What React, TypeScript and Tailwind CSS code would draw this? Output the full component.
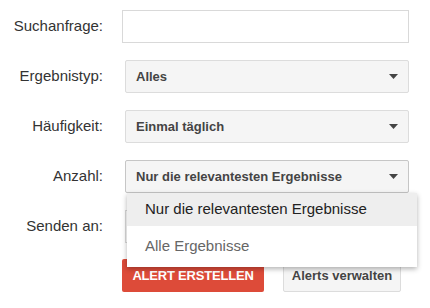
import React from 'react';

const font = { fontFamily: '"Liberation Sans", Arial, sans-serif' };

function Caret() {
    return (
        <svg width="9" height="5" viewBox="0 0 9 5" className="shrink-0">
            <path d="M0 0 L9 0 L4.5 5 Z" fill="#444" />
        </svg>
    );
}

function Row({ label, children }: { label: string; children: React.ReactNode }) {
    return (
        <div className="flex items-center h-[33px]">
            <div className="w-[104px] text-right text-[15px] text-[#333] pr-px">{label}</div>
            <div className="ml-[18px] flex-1 relative h-full">{children}</div>
        </div>
    );
}

function Select({ value, open }: { value: string; open?: boolean }) {
    return (
        <div
            className={
                open
                    ? 'ml-[3px] h-full flex items-center justify-between px-[10px] bg-[#f5f5f5] border border-[#c6c6c6] rounded-[2px] text-[13px] font-bold text-[#444]'
                    : 'ml-[3px] h-full flex items-center justify-between px-[10px] bg-[#f5f5f5] border border-[#dcdcdc] rounded-[2px] text-[13px] font-bold text-[#444]'
            }
        >
            <span>{value}</span>
            <Caret />
        </div>
    );
}

export default function App() {
    return (
        <div className="w-[430px] h-[308px] bg-white overflow-hidden" style={font}>
            <div className="pt-[10px] pr-[21px] flex flex-col gap-[17px]">
                <Row label="Suchanfrage:">
                    <div className="h-full border border-[#d9d9d9] bg-white" />
                </Row>
                <Row label="Ergebnistyp:">
                    <Select value="Alles" />
                </Row>
                <Row label="Häufigkeit:">
                    <Select value="Einmal täglich" />
                </Row>
                <Row label="Anzahl:">
                    <Select value="Nur die relevantesten Ergebnisse" open />
                    {/* Open dropdown menu */}
                    <div className="absolute z-10 top-full left-[5px] w-[290px] bg-white shadow-[0_2px_5px_rgba(0,0,0,0.3)] text-[15px]">
                        <div className="h-[33px] flex items-center pl-[18px] bg-[#eeeeee] text-[#222]">
                            Nur die relevantesten Ergebnisse
                        </div>
                        <div className="h-[41px] flex items-center pl-[18px] text-[#666]">
                            Alle Ergebnisse
                        </div>
                    </div>
                </Row>
                <Row label="Senden an:">
                    <div className="ml-[3px] h-full border border-[#d9d9d9] bg-white" />
                </Row>
            </div>
            <div className="mt-[16px] ml-[122px] flex items-center gap-[19px]">
                <button className="h-[33px] w-[142px] bg-[#dd4b39] text-white text-[13px] font-bold tracking-[-0.2px] rounded-[2px]">
                    ALERT ERSTELLEN
                </button>
                <button className="h-[32px] w-[118px] bg-[#f5f5f5] border border-[#dcdcdc] text-[#444] text-[13px] font-bold rounded-[2px]">
                    Alerts verwalten
                </button>
            </div>
        </div>
    );
}
